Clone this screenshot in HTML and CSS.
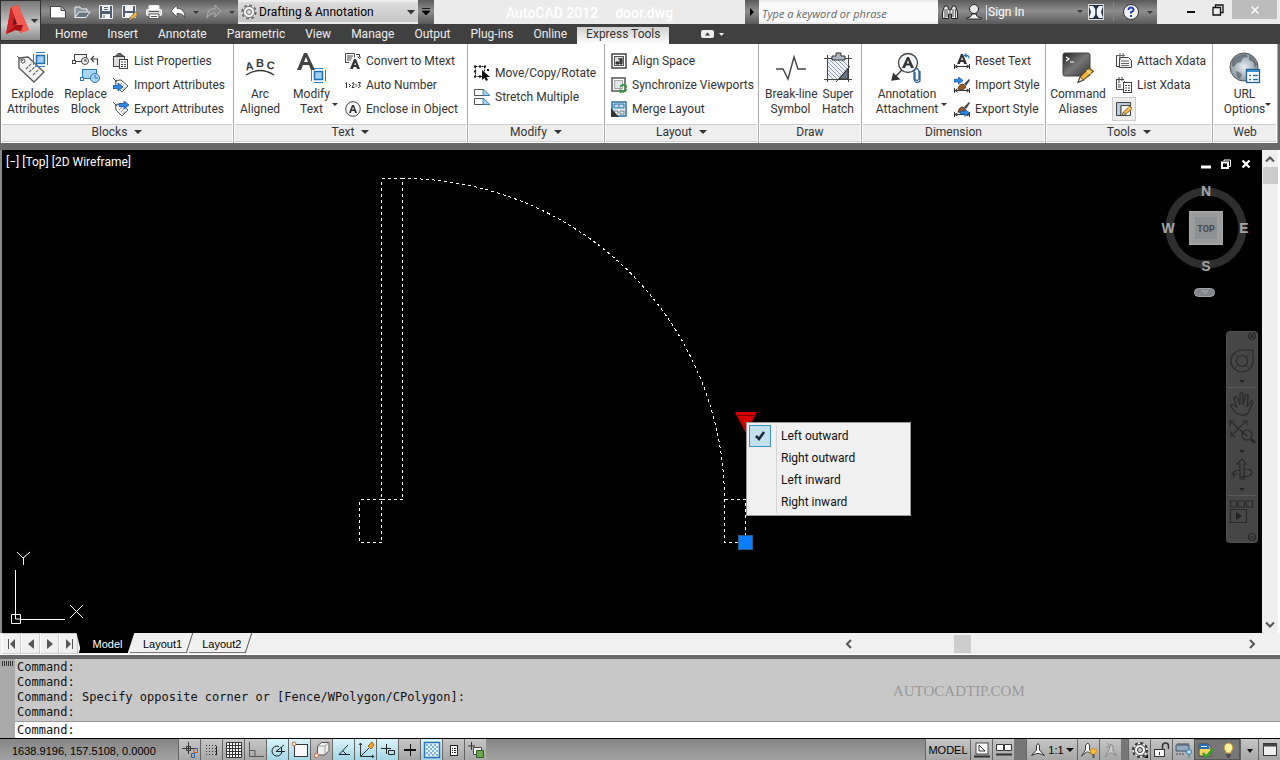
FILE: index.html
```html
<!DOCTYPE html>
<html lang="en">
<head>
<meta charset="utf-8">
<title>AutoCAD 2012 - door.dwg</title>
<link rel="stylesheet" href="styles.css">
</head>
<body>
<svg class="defs" width="0" height="0" aria-hidden="true">
  <defs>
    <g id="blueblock"><rect x="3.500" y="3.500" width="8" height="8" fill="#9fcdf0" stroke="#1f6fb5" stroke-width="1.500"/><path d="M.5 2v11M14.500 2v11M3 .5h9M3 14.500h9" stroke="#2f7fc5" fill="none"/></g>
    <g id="pencil"><path d="M0 13l2-5 8-8 4 3-9 8z" fill="#f3b53c" stroke="#6b4a1c"/><path d="M0 13l2-5 3 3z" fill="#f6e0b8" stroke="#333" stroke-width=".8"/><path d="M8 2l3.500 3.200" stroke="#fff1a8"/></g>
    <g id="arrow"><path d="M0 2.500h5V0l5 4-5 4V5.500H0z" fill="#2f8bea" stroke="#15509c" stroke-width=".8"/></g>
    <g id="dim"><path d="M.5 11v5M15.500 11v5M1 13.500h14M3.500 12L1 13.500 3.500 15M12.500 12l2.500 1.500-2.500 1.500" fill="none" stroke="#333"/></g>
    <g id="brush"><path d="M3 10q1-5 5-5l3 3q-2 4-8 2z" fill="#98592a" stroke="#4d2c12" stroke-width=".8"/><path d="M9 5l5-5 1 1-4 6z" fill="#444"/></g>
    <g id="tinytag"><path d="M2.500 3.500L8 3l7 6-6 6-6-6zM0 1l4 4" fill="#f7f7f7" stroke="#555"/><path d="M6 9l3-3M8 11l3-3M9.500 13l3-3" stroke="#888" stroke-width=".8"/></g>
  </defs>
</svg>
<header class="titlebar">
  <button class="appmenu" aria-label="Application menu">
    <svg width="38" height="38" viewBox="0 0 38 38"><path d="M9 5l7-2 11 25-9 3z" fill="#e33a35"/><path d="M9 5L4 32l8-3 3-10z" fill="#c41f22"/><path d="M9 5l9 26 9-3L16 3z" fill="#f25b52"/><path d="M9 5l6 18-3 1-2 3-6 5z" fill="#d12429"/><path d="M4 32l10-9 7 0-2 6-8-1z" fill="#a80f16"/><path d="M12 15l3 7-4 1z" fill="#661318"/><path d="M29 17h7l-3.500 4z" fill="#333"/></svg>
  </button>
  <nav class="qat" aria-label="Quick access">
    <button aria-label="New"><svg width="18" height="16"><path d="M1.500 2.500h11l4 4V14h-15z" fill="#fff" stroke="#444"/><path d="M12 2.500v4h4" fill="#bbb" stroke="#444"/></svg></button>
    <button aria-label="Open"><svg width="18" height="16"><path d="M2 14V3h5l1.500 2H14v3" fill="#8a949f" stroke="#eee"/><path d="M2 13.500L6 8h11l-4 5.500z" fill="#667380" stroke="#eee"/></svg></button>
    <button aria-label="Save"><svg width="16" height="16"><path d="M1.500 1.500h13v13h-13z" fill="#4e5d70" stroke="#edf0f3"/><path d="M4 2h8v5H4zM4 10h8v4H4z" fill="#f3f3f3"/><path d="M6 3.500h4M6 5.500h4M6 11v3" stroke="#567"/></svg></button>
    <button aria-label="Save as"><svg width="18" height="17"><path d="M1.500 1.500h13v12h-13z" fill="#4e5d70" stroke="#edf0f3"/><path d="M4 2h8v5H4zM4 9h8v4H4z" fill="#f3f3f3"/><use href="#pencil" transform="translate(8 8) scale(.65)"/></svg></button>
    <button aria-label="Print"><svg width="18" height="16"><path d="M4 6V1.500h10V6" fill="#fff" stroke="#eee"/><rect x="1.500" y="5.500" width="15" height="6" rx="1" fill="#dedede" stroke="#fff"/><path d="M4 10h10v4.500H4z" fill="#fff" stroke="#555"/><path d="M6 12.500h6M4 7.500h10" stroke="#555"/></svg></button>
    <button aria-label="Undo"><svg width="16" height="16"><path d="M7 1v3.500q8-.5 8 9.500-2-5-8-4.500V13L1 7z" fill="#fff" stroke="#444" stroke-width=".8"/></svg></button>
    <button class="drop" aria-label="Undo list"><svg width="8" height="8"><path d="M1 3h6L4 6z" fill="#3b3b3b"/></svg></button>
    <button aria-label="Redo"><svg width="16" height="16"><path d="M9 1v3.500q-8-.5-8 9.500 2-5 8-4.500V13l6-6z" fill="#888" stroke="#b5b5b5" stroke-width=".8"/></svg></button>
    <button class="drop" aria-label="Redo list"><svg width="8" height="8"><path d="M1 3h6L4 6z" fill="#3b3b3b"/></svg></button>
  </nav>
  <div class="workspace">
    <svg class="gear" width="16" height="16" viewBox="0 0 16 16"><circle cx="8" cy="8" r="6.800" fill="#eee" stroke="#666" stroke-width="1.600" stroke-dasharray="3 2.340"/><circle cx="8" cy="8" r="5.600" fill="#f5f5f5" stroke="#777"/><circle cx="8" cy="8" r="2.500" fill="#e4e4e4" stroke="#666"/></svg>
    <select aria-label="Workspace"><option>Drafting &amp; Annotation</option></select>
    <svg class="wsarrow" width="8" height="5"><path d="M0 0h8L4 4.500z" fill="#333"/></svg>
  </div>
  <button class="customize" aria-label="Customize toolbar"><svg width="8" height="8"><path d="M0 .5h8M0 3h8L4 7z" fill="#000" stroke="#000" stroke-width=".8"/></svg></button>
  <h1 class="title"><span>AutoCAD 2012</span><span>door.dwg</span></h1>
  <button class="expand" aria-label="Expand search"><svg width="6" height="8"><path d="M1 0l4 4-4 4z" fill="#000"/></svg></button>
  <input class="search" type="search" placeholder="Type a keyword or phrase" aria-label="Search help">
  <div class="infocenter">
    <button aria-label="Search"><svg width="18" height="18"><path d="M1.500 15.500V9l2-6h3l1.500 4h2l1.500-4h3l2 6v6.500h-6V11h-3v4.500z" fill="#e5e5e5" stroke="#222"/><path d="M4 6v9M6 6v8M12 6v8M14.500 6v9M8 9h2" stroke="#555"/></svg></button>
    <button class="signin"><svg width="18" height="18"><circle cx="9" cy="6" r="4.500" fill="#e9e9e9" stroke="#222"/><path d="M1.500 15q6-1 5-4h5q-1 3 5 4v1h-15z" fill="#f2f2f2" stroke="#222"/></svg><span>Sign In</span><svg width="8" height="8"><path d="M1 2h6L4 5z" fill="#3b3b3b"/></svg></button>
    <button aria-label="Exchange"><svg width="16" height="16"><rect x=".5" y=".5" width="15" height="15" fill="#26323c" stroke="#ddd"/><path d="M1 2h4l3 4 3-4h4l-2 6 2 6h-4l-3-4-3 4H1l2-6z" fill="#eef5ff"/><path d="M8 4v8" stroke="#26323c" stroke-width="1.500"/></svg></button>
    <span class="sep"></span>
    <button aria-label="Help"><svg width="18" height="18"><circle cx="9" cy="9" r="7.500" fill="#f2f2f2" stroke="#333"/><path d="M6.500 7q0-2.500 2.500-2.500T11.500 7Q11.500 8.200 9 9.200V10.500M9 12v2" stroke="#2346b5" stroke-width="2" fill="none"/></svg></button>
    <button class="drop" aria-label="Help menu"><svg width="8" height="8"><path d="M1 3h6L4 6z" fill="#3b3b3b"/></svg></button>
  </div>
  <div class="windowbtns">
    <button aria-label="Minimize"><svg width="10" height="10"><path d="M1 7h8" stroke="#111" stroke-width="2"/></svg></button>
    <button aria-label="Restore"><svg width="12" height="12"><path d="M3.500 3V1h7.500v7.500H9M1 3.500h7.500V11H1z" fill="none" stroke="#111" stroke-width="1.300"/></svg></button>
    <button class="close" aria-label="Close"><svg width="10" height="10"><path d="M1.500 1.500l7 7M8.500 1.500l-7 7" stroke="#fff" stroke-width="1.500"/></svg></button>
  </div>
</header>

<nav class="tabs">
  <a href="#">Home</a><a href="#">Insert</a><a href="#">Annotate</a><a href="#">Parametric</a><a href="#">View</a><a href="#">Manage</a><a href="#">Output</a><a href="#">Plug-ins</a><a href="#">Online</a><a href="#" class="active" aria-current="page">Express Tools</a>
  <button aria-label="Minimize ribbon"><svg width="24" height="8"><rect x="0" y="0" width="13" height="8" rx="2" fill="#eee"/><path d="M4 5.500h5L6.500 2.500z" fill="#333"/><path d="M18 3h5l-2.500 3z" fill="#eee"/></svg></button>
</nav>

<main class="ribbon">
  <section class="panel">
    <div class="tools">
      <button class="big"><svg width="32" height="32"><path d="M2 6l9-1 16 15-10 10L2 16z" fill="#f3f3f3" stroke="#555" stroke-width="1.300"/><path d="M9 17l6-6M12 20l7-6M16 23l6-6" stroke="#666" stroke-width="1.200" stroke-dasharray="3 1"/><circle cx="6" cy="9" r="2" fill="#fff" stroke="#555"/><path d="M0 4l6 5" stroke="#555"/><use href="#blueblock" x="16" y="0"/></svg>Explode<br>Attributes</button>
      <button class="big"><svg width="32" height="32"><rect x="4.500" y="2.500" width="12" height="7" fill="#f4f4f4" stroke="#444"/><rect x="2.500" y="8.500" width="3" height="3" fill="#fff" stroke="#444"/><circle cx="15" cy="9" r="3.500" fill="#f4f4f4" stroke="#444"/><path d="M15 7v2h2M27.500 13V7H21M24 4l-3 3 3 3" fill="none" stroke="#444" stroke-width="1.200"/><rect x="12.500" y="17.500" width="14" height="9" fill="#a9d7f4" stroke="#2778b5"/><rect x="10.500" y="25.500" width="3" height="3" fill="#fff" stroke="#2778b5"/><circle cx="25" cy="26" r="4.500" fill="#a9d7f4" stroke="#2778b5"/><path d="M25 23v3h3" fill="none" stroke="#2778b5"/></svg>Replace<br>Block</button>
      <ul class="rows">
        <li><button><svg width="16" height="16"><rect x=".5" y="3.500" width="11" height="10" fill="#ddd" stroke="#444"/><path d="M3 3.500V2h2V.5h3V2h2v1.500z" fill="#666" stroke="#444"/><rect x="6.500" y="6.500" width="8" height="9" fill="#fff" stroke="#444"/><path d="M8 9h2M11 9h2M8 11.500h2M11 11.500h2M8 13.500h2M11 13.500h2" stroke="#444"/></svg>List Properties</button></li>
        <li><button><svg width="16" height="16"><use href="#tinytag"/><use href="#arrow" x="0" y="6"/></svg>Import Attributes</button></li>
        <li><button><svg width="16" height="16"><use href="#tinytag"/><use href="#arrow" x="6" y="0"/></svg>Export Attributes</button></li>
      </ul>
    </div>
    <h2>Blocks<i class="tri"></i></h2>
  </section>
  <section class="panel">
    <div class="tools tight">
      <button class="big narrowbtn"><svg width="32" height="32"><g font-family="Liberation Sans,sans-serif" font-weight="bold" font-size="11" fill="#3a3a3a"><text x="2" y="18" transform="rotate(-8 5 18)">A</text><text x="12" y="15">B</text><text x="22" y="17" transform="rotate(8 26 18)">C</text></g><path d="M2 23Q16 14 30 23" fill="none" stroke="#333" stroke-width="1.300"/></svg>Arc<br>Aligned</button>
      <button class="big caret"><svg width="32" height="32"><path d="M1 18L8 1h3l8 17h-4l-2-5H7l-2 5zM8 10h4l-2-5z" fill="#444" fill-rule="evenodd"/><use href="#blueblock" x="15" y="16"/></svg>Modify<br>Text<i class="tri"></i></button>
      <ul class="rows spaced">
        <li><button><svg width="16" height="16"><path d="M.5 10V.5h9v4M2 3h6M2 5h5M2 7h4M1 9.500h3" fill="none" stroke="#444"/><path d="M5 16L9 6h2l4 10h-3l-.7-2H8.500L8 16zM9.300 12h1.800l-.9-2.500z" fill="#333" fill-rule="evenodd"/><path d="M11 1.500h3.500V4M12.500 3.500l2 2 1.500-2" fill="none" stroke="#333"/></svg>Convert to Mtext</button></li>
        <li><button><svg width="16" height="16"><path d="M.5 6.500l1-1V11M4 7l1.500 1.500L4 10M7 6.500q2-2 2 .5L7 10.500h2.500M10.500 7L12 8.500 10.500 10M13 5.500h2.500L14 8q3 .5 0 2.500h-1" fill="none" stroke="#333"/></svg>Auto Number</button></li>
        <li><button><svg width="16" height="16"><circle cx="8" cy="8" r="7.300" fill="#f7f7f7" stroke="#444"/><path d="M4 12L7 4h2l3 8h-2l-.6-2H6.500L6 12zM7 8.500h2L8 5.800z" fill="#333" fill-rule="evenodd"/></svg>Enclose in Object</button></li>
      </ul>
    </div>
    <h2>Text<i class="tri"></i></h2>
  </section>
  <section class="panel">
    <div class="tools">
      <ul class="rows mid">
        <li><button><svg width="16" height="16"><rect x="1.500" y="1.500" width="9" height="10" fill="none" stroke="#222" stroke-dasharray="2 1"/><path d="M0 1.500h3M5 1.500h3M10 1.500h3M0 6.500h3M0 11.500h3M5 11.500h3M13 5h3" stroke="#111" stroke-width="2" stroke-dasharray="2 1"/><path d="M8 5v10l2.500-2 1.500 3 2-1-1.500-3H16z" fill="#111"/></svg>Move/Copy/Rotate</button></li>
        <li><button><svg width="16" height="16"><path d="M9 .5H.5v6H15.500M9 9.500H.5v6H15.500" fill="none" stroke="#555"/><path d="M9 0l7 6.500H9zM9 9l7 6.500H9z" fill="#a9d0ed" stroke="#2778b5" stroke-width=".8"/></svg>Stretch Multiple</button></li>
      </ul>
    </div>
    <h2>Modify<i class="tri"></i></h2>
  </section>
  <section class="panel">
    <div class="tools">
      <ul class="rows">
        <li><button><svg width="16" height="16"><rect x="1" y="1" width="14" height="14" fill="#fff" stroke="#444" stroke-width="1.500"/><rect x="3.500" y="3.500" width="9" height="9" fill="#ddd" stroke="#555"/><path d="M5 9h3v2H5zM7 6h2v5h2V5" fill="#333" stroke="#333"/></svg>Align Space</button></li>
        <li><button><svg width="16" height="16"><rect x="1" y="1" width="13" height="13" fill="#fff" stroke="#555" stroke-width="1.500"/><rect x="3.500" y="3.500" width="8" height="8" fill="#dfe6ec" stroke="#aaa"/><path d="M9 10q3-4 6-.5V8M15.500 12q-3 5-6 1.500V16" fill="none" stroke="#2c9338" stroke-width="1.600"/></svg>Synchronize Viewports</button></li>
        <li><button><svg width="16" height="16"><rect x="1" y="1" width="14" height="14" fill="#e8f2fa" stroke="#2671a8" stroke-width="1.500"/><path d="M3 3h10v4H3z" fill="#b7dcf5" stroke="#2671a8"/><path d="M8 3v4M3 10h4v3M9 10h4v3H9z" fill="none" stroke="#777"/><path d="M0 7l8 9H0z" fill="#333"/></svg>Merge Layout</button></li>
      </ul>
    </div>
    <h2>Layout<i class="tri"></i></h2>
  </section>
  <section class="panel">
    <div class="tools">
      <button class="big"><svg width="32" height="32"><path d="M1 17h7l5 10 6-22 4 12h8" fill="none" stroke="#444" stroke-width="1.400"/></svg>Break-line<br>Symbol</button>
      <button class="big slim"><svg width="32" height="32"><path d="M5.500 3v27M26.500 3v27M2 6.500h28M2 27.500h28" stroke="#444"/><rect x="6" y="7" width="20" height="20" fill="#eef1f5"/><path d="M6 10l17 17M6 14l13 13M6 18l9 9M6 22l5 5M8 8l17 17M12 8l14 14M16 8l10 10M20 8l6 6" stroke="#8794a5" stroke-width=".9"/><path d="M10 8V4h4V1h5v3h4v4z" fill="#aab6c3" stroke="#333"/><path d="M17 27l9-10v10z" fill="#6c7784" stroke="#333"/><path d="M14 30l14-16" stroke="#333"/></svg>Super<br>Hatch</button>
    </div>
    <h2>Draw</h2>
  </section>
  <section class="panel">
    <div class="tools">
      <button class="big wide caret"><svg width="32" height="32"><circle cx="17" cy="11" r="9.500" fill="#f1f4f7" stroke="#444" stroke-width="1.300"/><path d="M11 16l5-11h2l5 11h-3l-1-2.500h-4L14 16zM15.800 11.500h2.400L17 8z" fill="#333" fill-rule="evenodd"/><path d="M11 18L3 26M1 28l1.500-6L8 27z" fill="#333" stroke="#333" stroke-width="1.300"/><path d="M24 20v7q2 3 4 0v-8q-2-5-5 0v8q2 6 6 2V19" fill="none" stroke="#2d6596" stroke-width="1.300"/></svg>Annotation<br>Attachment<i class="tri"></i></button>
      <ul class="rows spaced">
        <li><button><svg width="16" height="16"><use href="#dim"/><path d="M3 11L7 1h2l4 10h-3L9.300 9H6.500L6 11zM7 7h2L8 4z" fill="#333" fill-rule="evenodd"/><path d="M12 .5L10.500 2.500 13 4M11 2.500q4-1 4 3" fill="none" stroke="#2473b5" stroke-width="1.200"/></svg>Reset Text</button></li>
        <li><button><svg width="16" height="16"><use href="#dim"/><use href="#brush" x="1" y="2"/><use href="#arrow" transform="scale(.9)"/></svg>Import Style</button></li>
        <li><button><svg width="16" height="16"><use href="#dim"/><use href="#brush" x="1" y="1"/><use href="#arrow" x="7" y="9" transform="scale(.9)"/></svg>Export Style</button></li>
      </ul>
    </div>
    <h2>Dimension</h2>
  </section>
  <section class="panel">
    <div class="tools tight">
      <button class="big command-btn"><svg width="32" height="32"><defs><linearGradient id="term" x2="1" y2="1"><stop stop-color="#222"/><stop offset=".5" stop-color="#777"/><stop offset="1" stop-color="#333"/></linearGradient></defs><rect x="1" y="1" width="27" height="23" rx="2" fill="url(#term)" stroke="#444"/><path d="M4 5l3 2-3 2M8 10h4" fill="none" stroke="#fff" stroke-width="1.200"/><use href="#pencil" transform="translate(16 16) scale(1.100)"/></svg>Command<br>Aliases</button>
      <ul class="rows spaced">
        <li><button><svg width="16" height="16"><path d="M.5 2v11.500h3M3.500 4.500h9l3 3v7h-12z" fill="#f4f4f4" stroke="#444"/><path d="M5 8h8M5 10.500h8M5 12.500h8M0 2.500h9M4 0v7M7 0v4" stroke="#666"/></svg>Attach Xdata</button></li>
        <li><button><svg width="16" height="16"><path d="M.5 2v10.500h8V4M0 2.500h8M3 0v6M6 0v4M2 8h3M2 10h3" fill="none" stroke="#444"/><rect x="7.500" y="5.500" width="8" height="10" fill="#fff" stroke="#444"/><path d="M9 8.500h2M12 8.500h2M9 11h2M12 11h2M9 13.500h2M12 13.500h2" stroke="#444"/></svg>List Xdata</button></li>
        <li><button class="boxed" aria-label="Tool palette editor"><svg width="16" height="16"><path d="M.5 1.500h14v3H5v10H.5z" fill="#b9cbe0" stroke="#444"/><path d="M5 4.500h9.500v10H5z" fill="#fff" stroke="#444"/><use href="#pencil" transform="translate(6 5) scale(.75)"/></svg></button></li>
      </ul>
    </div>
    <h2>Tools<i class="tri"></i></h2>
  </section>
  <section class="panel">
    <div class="tools">
      <button class="big caret"><svg width="32" height="32"><defs><radialGradient id="globe"><stop stop-color="#e8edf1"/><stop offset="1" stop-color="#8b9aa6"/></radialGradient></defs><circle cx="15" cy="15" r="14" fill="url(#globe)" stroke="#555"/><path d="M3 9q5-7 14-7l2 3-5 1-2 4-4 1-3 4-2-1zM20 3q6 3 8 10l-2 3-2-6-4-2zM7 19l5 2 1 3-3 3q-3-3-3-8z" fill="#4d565e" opacity=".6"/><rect x="17.500" y="17.500" width="13" height="13" fill="#fff" stroke="#1f5d96" stroke-width="1.300"/><path d="M18 19h12" stroke="#3a8fd0" stroke-width="2"/><path d="M20 23.500h2M24 23.500h5M20 27.500h2M24 27.500h5" stroke="#2773ad" stroke-width="1.300"/></svg>URL<br>Options<i class="tri"></i></button>
    </div>
    <h2>Web</h2>
  </section>
</main>

<section class="viewport">
  <div class="stage">
    <svg class="drawing">
      <g transform="translate(-2 -150)" fill="none" stroke="#fff">
        <g stroke-dasharray="3 3" shape-rendering="crispEdges">
          <path d="M402.500 178.500H381.500V499.500H402.500z"/>
          <path d="M402.500 178.500A322 322 0 0 1 724.500 499.500"/>
          <path d="M381.500 499.500H359.500V542.500H381.500z"/>
          <path d="M724.500 499.500H745.500V542.500H724.500z"/>
        </g>
        <path d="M735 412h22l-11 21z" fill="#d40000" stroke="none"/>
        <path d="M736 415.500h20" stroke="#700"/>
        <rect x="738.500" y="535.500" width="14" height="14" fill="#0a7dff" stroke="#2a5a8a"/>
        <path d="M15.500 570v44M20 619.500h45M11.500 614.500h9v9h-9zM15.500 614v5h5M17 552l6 6 7-6M23.500 558v7M70 605l13 13M83 605l-13 13"/>
      </g>
    </svg>
    <p class="viewlabel"><button>[−]</button> <button>[Top]</button> <button>[2D Wireframe]</button></p>
    <div class="docbtns">
      <button aria-label="Minimize drawing"><svg width="10" height="10"><path d="M0 8h10" stroke="#fff" stroke-width="3"/></svg></button>
      <button aria-label="Restore drawing"><svg width="10" height="10"><path d="M3 2V1h6.500v6.500H8" fill="none" stroke="#fff"/><path d="M1 3.500h6V9H1z" fill="none" stroke="#fff" stroke-width="2"/></svg></button>
      <button aria-label="Close drawing"><svg width="10" height="10"><path d="M1.500 1.500l7 7M8.500 1.500l-7 7" stroke="#fff" stroke-width="2.200"/></svg></button>
    </div>
    <svg class="viewcube" width="90" height="120" viewBox="0 0 90 120" role="img" aria-label="View cube">
      <circle cx="46" cy="47" r="36.500" fill="none" stroke="#2e2e2e" stroke-width="8"/>
      <rect x="29.500" y="30.500" width="33" height="33" fill="#9c9c9c" stroke="#aaa"/><rect x="35" y="36" width="22" height="22" fill="#8e9194"/>
      <g font-family="Liberation Sans,sans-serif" font-weight="bold" text-anchor="middle" fill="#a5a5a5" font-size="14"><text x="46" y="15">N</text><text x="8" y="52">W</text><text x="84" y="52">E</text><text x="46" y="90">S</text><text x="46" y="51" font-size="9" fill="#44484c" font-family="Roboto,sans-serif">TOP</text></g>
      <rect x="34.500" y="107.500" width="20" height="8" rx="4" fill="#84848c" stroke="#a3a3aa"/><path d="M42 110h6l-3 3z" fill="none" stroke="#aaa"/>
    </svg>
    <svg class="navbar" width="32" height="212" viewBox="0 0 32 212" role="img" aria-label="Navigation bar">
      <rect x=".5" y=".5" width="31" height="211" rx="3" fill="#464646" stroke="#505050"/>
      <g fill="none" stroke="#292929" stroke-width="1.200"><circle cx="26" cy="5" r="3.500"/><path d="M24 3l4 4M28 3l-4 4"/><path d="M27 19v10a11 11 0 1 1-11-10z"/><circle cx="16" cy="30" r="5.500"/><path d="M8 22l4 4M24 22l-4 4M8 38l4-4M24 38l-4-4" stroke-width=".8"/><path d="M11 83q-6-6-6-9 2-2 6 3L8 67q2-3 4 1l2 6V63q2-3 3 0v11l3-10q3-1 2 2l-1 10 4-6q3 0 1 3l-4 9q-4 4-9 1z"/><path d="M5 91l16 14M20 90L6 104M4 95v-5h5M16 90h5v4M5 100v5h5"/><circle cx="21" cy="104" r="5"/><path d="M25 108l4 4" stroke-width="3"/><path d="M14 148v-15h-3l5-5 4 5h-2v15z"/><path d="M8 145q-4-5 6-6M18 138q9 0 8 4t-12 4M8 140v7M5 143h7"/><path d="M4.500 170h6v6h-6zM12.500 170h6v6h-6zM20.500 170h6v6h-6zM4.500 178.500h16v13h-16z"/><circle cx="26" cy="206" r="3.500"/><path d="M24 206h4"/></g>
      <path d="M13 49h6l-3 3zM13 119h6l-3 3zM13 157h6l-3 3zM10 181v8l6-4z" fill="#222"/><path d="M2 56.500h28M2 164.500h28" stroke="#5a5a5a"/>
    </svg>
    <div class="menu" role="menu">
      <button role="menuitemradio" aria-checked="true"><span class="check"><svg width="12" height="12"><path d="M2 6l3 3 5-7" fill="none" stroke="#1b2a33" stroke-width="2.500"/></svg></span>Left outward</button>
      <button role="menuitemradio" aria-checked="false"><span></span>Right outward</button>
      <button role="menuitemradio" aria-checked="false"><span></span>Left inward</button>
      <button role="menuitemradio" aria-checked="false"><span></span>Right inward</button>
    </div>
  </div>
  <div class="vscroll">
    <button aria-label="Scroll up"><svg width="10" height="8"><path d="M1 6.500l4-4 4 4" fill="none" stroke="#555" stroke-width="2"/></svg></button>
    <span class="thumb"></span>
    <button aria-label="Scroll down"><svg width="10" height="8"><path d="M1 1.500l4 4 4-4" fill="none" stroke="#555" stroke-width="2"/></svg></button>
  </div>
</section>

<div class="layoutbar">
  <div class="pager">
    <button aria-label="First layout"><svg width="10" height="12"><path d="M1.500 1v10" stroke="#555"/><path d="M8 1v10L3 6z" fill="#555"/></svg></button>
    <button aria-label="Previous layout"><svg width="10" height="12"><path d="M8 1v10L2 6z" fill="#555"/></svg></button>
    <button aria-label="Next layout"><svg width="10" height="12"><path d="M2 1v10l6-5z" fill="#555"/></svg></button>
    <button aria-label="Last layout"><svg width="10" height="12"><path d="M8.500 1v10" stroke="#555"/><path d="M2 1v10l5-5z" fill="#555"/></svg></button>
  </div>
  <nav class="sheets"><a href="#" class="current">Model</a><a href="#">Layout1</a><a href="#">Layout2</a></nav>
  <div class="hscroll">
    <button aria-label="Scroll left"><svg width="8" height="10"><path d="M6 1L2 5l4 4" fill="none" stroke="#555" stroke-width="2"/></svg></button>
    <span class="thumb"></span>
    <button aria-label="Scroll right"><svg width="8" height="10"><path d="M2 1l4 4-4 4" fill="none" stroke="#555" stroke-width="2"/></svg></button>
  </div>
</div>

<section class="command">
  <span class="grip"></span>
  <div class="console">
    <div class="history"><p>Command:</p><p>Command:</p><p>Command: Specify opposite corner or [Fence/WPolygon/CPolygon]:</p><p>Command:</p><span class="mark">AUTOCADTIP.COM</span></div>
    <div class="prompt"><label for="cmd">Command:</label><input id="cmd" type="text"></div>
  </div>
</section>

<footer class="status">
  <output class="coords">1638.9196, 157.5108, 0.0000</output>
  <div class="group">
    <button aria-label="Infer constraints"><svg width="18" height="18"><path d="M1 7.500h12M7.500 1v12M5.500 5.500h4v4h-4z" fill="none" stroke="#333"/><path d="M13 7.500h3.500v4M10.500 12.500h3v4h-3z" fill="none" stroke="#1f5fae"/><path d="M16.500 8v3.500H13v-4" fill="none" stroke="#c6512b"/></svg></button>
    <button aria-label="Snap mode"><svg width="18" height="18"><path d="M3 4.500h12M3 7.500h12M3 10.500h12M3 13.500h12" stroke="#333" stroke-dasharray="1 2"/><path d="M13.500 5v9" stroke="#222"/></svg></button>
    <button aria-label="Grid"><svg width="18" height="18"><path d="M1.500 1.500h15v15h-15zM4.500 1v16M7.500 1v16M10.500 1v16M13.500 1v16M1 4.500h16M1 7.500h16M1 10.500h16M1 13.500h16" fill="#fff" stroke="#333"/></svg></button>
    <button aria-label="Ortho"><svg width="18" height="18"><path d="M2.500 1v14.500H17M3 9.500h5v6" fill="none" stroke="#555"/></svg></button>
    <button class="on" aria-label="Polar tracking"><svg width="18" height="18"><path d="M13 10a5 5 0 1 1-3-4.500M15 4L7 10.500h9M12.500 6v7" fill="none" stroke="#222"/></svg></button>
    <button class="on" aria-label="Object snap"><svg width="18" height="18"><rect x="3.500" y="3.500" width="13" height="12" fill="#f8f8f8" stroke="#333"/><circle cx="3" cy="3" r="2" fill="#fff" stroke="#d55c29"/></svg></button>
    <button aria-label="3D object snap"><svg width="18" height="18"><path d="M4.500 5l4-3.500h7.500v8L12 14H4.500z" fill="#eee" stroke="#555"/><path d="M5 5h7v9M12 5l4-3.500" fill="none" stroke="#888" stroke-width=".8"/><circle cx="3.500" cy="14.500" r="2" fill="#fff" stroke="#d55c29"/></svg></button>
    <button class="on" aria-label="Object snap tracking"><svg width="18" height="18"><path d="M13 4L4 13.500h11M8 10l3 3" fill="none" stroke="#222"/></svg></button>
    <button class="on" aria-label="Dynamic UCS"><svg width="18" height="18"><path d="M3.500 2v13.500H17M4 15L12 7M2 4l1.500-2L5 4M15 14l2 1.500-2 1.500" fill="none" stroke="#333"/><path d="M11 5l4-4 2 3-3 4z" fill="#f0a42e" stroke="#a4681a"/></svg></button>
    <button class="on" aria-label="Dynamic input"><svg width="18" height="18"><path d="M2 7.500h10M7.500 3v10M9.500 9.500h6v4h-6z" fill="none" stroke="#222"/></svg></button>
    <button aria-label="Lineweight"><svg width="18" height="18"><path d="M3 9h12" stroke="#111" stroke-width="2"/><path d="M9.500 3v12" stroke="#111"/></svg></button>
    <button class="on" aria-label="Transparency"><svg width="18" height="18"><rect x="1.500" y="1.500" width="15" height="15" fill="#e7f3fc" stroke="#2b73b5" stroke-width="1.500"/><path d="M3 4h12M3 8h12M3 12h12" stroke="#80b3da" stroke-width="2" stroke-dasharray="2 2"/><path d="M5 6h10M5 10h10M5 14h10" stroke="#80b3da" stroke-width="2" stroke-dasharray="2 2"/></svg></button>
    <button aria-label="Quick properties"><svg width="18" height="18"><rect x="5.500" y="4.500" width="7" height="10" fill="#fff" stroke="#222"/><path d="M7 7.500h1M9 7.500h2M7 9.500h1M9 9.500h2M7 11.500h1M9 11.500h2" stroke="#222"/></svg></button>
    <button aria-label="Selection cycling"><svg width="18" height="18"><path d="M1 5h7M4.500 1v8" stroke="#333"/><path d="M6.500 6.500h8v7h-8z" fill="#fff" stroke="#444"/><path d="M9.500 9.500h7v7h-7z" fill="#6aa84f" stroke="#2f5a20"/></svg></button>
  </div>
  <div class="group right">
    <button class="text">MODEL</button>
    <button aria-label="Quick view layouts"><svg width="18" height="18"><rect x="3" y="2" width="12" height="11" fill="#fff" stroke="#444"/><path d="M6 4v6h6z" fill="none" stroke="#333"/><path d="M1 15.500h16" stroke="#333" stroke-width="2"/></svg></button>
    <button aria-label="Quick view drawings"><svg width="18" height="18"><path d="M1.500 3.500h7v6h-7zM9.500 3.500h7v6h-7z" fill="#fff" stroke="#333"/><path d="M1 13.500h16" stroke="#333" stroke-width="2"/></svg></button>
    <span class="gap"></span>
    <button class="text scale"><svg width="16" height="16"><path d="M8 1.500l1.500 2V8l5 5.500-5-2h-3l-5 2 5-5.500V3.500z" fill="#fff" stroke="#333"/></svg>1:1<svg width="8" height="6"><path d="M0 1h8L4 5z" fill="#111"/></svg></button>
    <button aria-label="Annotation visibility"><svg width="18" height="18"><path d="M8 2l1.500 2v5l4 5-5-3h-2l-5 4 4-6V4z" fill="#fff" stroke="#444"/><circle cx="13.500" cy="10.500" r="3" fill="#ffc13c" stroke="#d9882a"/><path d="M13.500 13v4" stroke="#555" stroke-width="2"/></svg></button>
    <button aria-label="Automatic scale"><svg width="18" height="18"><path d="M9 3l2 2v5l4 5-5-3H8l-5 4 4-7zM5 2l3 3M4 6h3" fill="#ccc" stroke="#888"/></svg></button>
    <span class="gap small"></span>
    <button aria-label="Workspace switching"><svg width="18" height="18"><circle cx="9" cy="9" r="7" fill="#fff" stroke="#333" stroke-width="2" stroke-dasharray="3 2.500"/><circle cx="9" cy="9" r="5.500" fill="#fff" stroke="#444"/><circle cx="9" cy="9" r="2.500" fill="#ccc" stroke="#333"/><path d="M17 13v4h-4z" fill="#111"/></svg></button>
    <button aria-label="Lock interface"><svg width="18" height="18"><rect x="1.500" y="8.500" width="10" height="7" fill="#fff" stroke="#333"/><path d="M9.500 8V5q0-3 3-3t3 3v3" fill="none" stroke="#333" stroke-width="1.500"/><path d="M6.500 11v3" stroke="#333"/></svg></button>
    <button aria-label="Hardware acceleration"><svg width="18" height="18"><path d="M1 4h13v6H1z" fill="#93a9bd" stroke="#3f5468"/><path d="M2 12v2M5 12v2M8 12v2M2 3h12" stroke="#445"/><circle cx="14" cy="11" r="2.500" fill="#b9dcf5" stroke="#377bb0"/><path d="M14 13v4" stroke="#377bb0"/></svg></button>
    <div class="tray">
      <button aria-label="Drawing status"><svg width="18" height="18"><path d="M2 3h9l3 3v9H2z" fill="#f5d65c" stroke="#444"/><path d="M2 3h9l2 5H2z" fill="#2b6bb0"/><path d="M4 5.500h6" stroke="#fff"/><path d="M6 12l3 4 7-8" fill="none" stroke="#2fa12f" stroke-width="2.500"/></svg></button>
      <button aria-label="Isolate objects"><svg width="18" height="18"><path d="M7 12q0-2-2-4 0-6 4.500-6T14 8q-2 2-2 4z" fill="#fff0a0" stroke="#b88e37"/><path d="M7 14h5M8 16h3" stroke="#444" stroke-width="1.500"/></svg></button>
    </div>
    <button class="narrow" aria-label="Status bar menu"><svg width="8" height="8"><path d="M1 3h6L4 7z" fill="#111"/></svg></button>
    <button aria-label="Clean screen"><svg width="18" height="18"><rect x="2.500" y="2.500" width="13" height="12" fill="#eee" stroke="#333"/><path d="M2 4h14" stroke="#444" stroke-width="3"/></svg></button>
  </div>
</footer>
</body>
</html>
```
FILE: styles.css
```css
* { box-sizing: border-box; }
body {
  margin: 0;
  min-height: 100vh;
  display: flex;
  flex-direction: column;
  background: #686868;
  color: #333;
  font: 12px/15px Roboto, "Noto Sans", sans-serif;
}
button, input, select { font: inherit; color: inherit; margin: 0; padding: 0; border: 0; background: none; }
button { display: inline-flex; align-items: center; justify-content: center; }
svg { flex: none; display: block; }
a { color: inherit; text-decoration: none; }
h1, h2, p, ul { margin: 0; padding: 0; font-size: inherit; font-weight: normal; list-style: none; }
.defs { position: absolute; }

.titlebar { position: relative; display: flex; height: 24px; background: #ebebeb; }
.appmenu {
  position: absolute; z-index: 2; left: 0; top: 0; width: 41px; height: 41px;
  border: 1px solid #333; background: linear-gradient(#777, #c9c9c9 60%, #8b8b8b);
}
.qat, .infocenter, .customize, .expand { background: linear-gradient(#5b5b5b, #8e8e8e 45%, #5a5a5a); }
.qat { display: flex; align-items: center; width: 238px; padding-left: 46px; }
.qat button { width: 24px; height: 24px; }
.qat .drop { width: 12px; }
.workspace {
  display: grid; grid-template-columns: 16px 1fr 8px; align-items: center; gap: 2px;
  width: 180px; margin: 2px 0; padding: 0 3px; background: linear-gradient(#dcdcdc, #c6c6c6); color: #000;
}
.workspace select { appearance: none; min-width: 0; outline: 0; }
.customize { width: 16px; }
.title {
  flex: 1; display: flex; justify-content: center; gap: 17px; padding-top: 5px;
  color: #fff; font: 14px/16px Roboto, sans-serif; font-weight: 500;
}
.expand { width: 14px; }
.search { width: 179px; margin: 2px 0; padding: 3px 3px 0; background: #fafafa; outline: 0; font-size: 11px; font-style: italic; font-family: "Open Sans", sans-serif; appearance: none; }
.search::placeholder { color: #666; opacity: 1; }
.infocenter { display: flex; align-items: center; width: 219px; }
.infocenter button { width: 24px; }
.infocenter .signin { width: 124px; flex: 1; gap: 3px; padding-left: 3px; color: #fff; }
.signin span { flex: 1; text-align: left; padding-left: 1px; border-left: 1px solid #ddd; }
.infocenter .drop { width: 14px; }
.sep { width: 1px; height: 18px; margin: 0 5px; background: #888; }
.windowbtns { display: flex; width: 123px; padding: 0 3px 0 20px; }
.windowbtns button { width: 27px; height: 19px; }
.windowbtns .close { width: 45px; margin-left: auto; background: #bcbcbc; }

.tabs { display: flex; height: 20px; padding-left: 45px; background: #404040; color: #eee; }
.tabs a { padding: 3px 10px 2px; }
.tabs .active { background: linear-gradient(#cfcfcf, #fff); color: #333; margin-top: 3px; padding: 0 9px; }
.tabs button { margin-left: 32px; }

.ribbon {
  display: grid; grid-template-columns: 233fr 234fr 137fr 154fr 103fr 184fr 167fr 65fr;
  height: 99px; margin-right: 2px; background: #fff; border-left: 1px solid #777;
}
.panel { display: flex; flex-direction: column; min-width: 0; border-right: 1px solid #aaa; white-space: nowrap; }
.panel h2 { margin: 0 1px 1px; height: 18px; text-align: center; background: #eee; border-top: 1px solid #ccc; border-bottom: 1px solid #ccc; }
.tri { display: inline-block; margin-left: 7px; border: 4px solid transparent; border-top-color: #333; border-bottom: 0; vertical-align: 2px; }
.tools { flex: 1; display: flex; padding: 5px 0 0 6px; gap: 2px; }
.tight { padding-left: 2px; }
.big { position: relative; display: block; width: 51px; height: 69px; padding-top: 2px; }
.big svg { margin: 0 auto 3px; }
.big .tri { position: absolute; right: -1px; bottom: 12px; margin: 0; border-width: 3px; border-bottom: 0; }
.narrowbtn { width: 48px; }
.command-btn { width: 60px; }
.slim { width: 40px; }
.wide { width: 78px; }
.rows li { height: 24px; display: flex; align-items: center; }
.rows button { gap: 5px; }
.spaced { padding-left: 6px; }
.mid { padding-top: 12px; }
.rows .boxed { padding: 3px; margin-left: -4px; background: #eee; border: 1px solid #ccc; }

.viewport { flex: 1; display: flex; margin-top: 7px; min-height: 300px; background: #efefef; }
.stage { position: relative; flex: 1; background: #000; border-left: 2px solid #888; color: #fff; overflow: hidden; }
.drawing { position: absolute; inset: 0; width: 100%; height: 100%; }
.viewlabel { position: relative; padding: 5px 4px; }
.docbtns { position: absolute; right: 11px; top: 9px; display: flex; gap: 10px; }
.viewcube { position: absolute; right: 12px; top: 31px; }
.navbar { position: absolute; right: 4px; top: 181px; }
.menu {
  position: absolute; left: 744px; top: 272px; width: 165px; padding: 2px;
  display: flex; flex-direction: column; background: #f0f0f0; border: 1px solid #999; color: #111;
}
.menu button { justify-content: flex-start; height: 22px; gap: 10px; }
.menu span { width: 22px; height: 22px; display: grid; place-items: center; }
.menu::before { content: ""; position: absolute; left: 29px; top: 2px; bottom: 2px; width: 1px; background: #d5d5d5; }
.menu .check { background: #c4dff0; border: 1px solid #3c92c0; }
.vscroll { width: 18px; display: flex; flex-direction: column; align-items: center; border-right: 2px solid #fff; }
.vscroll button { width: 100%; height: 17px; }
.vscroll .thumb { width: 15px; height: 17px; background: #cdcdcd; margin-bottom: auto; }

.layoutbar { display: flex; height: 22px; background: #f0f0f0; border-bottom: 1px solid #fff; font: 11px/14px "Liberation Sans", sans-serif; color: #000; padding-left: 2px; }
.pager { display: flex; }
.pager button { width: 19px; border: 1px solid #ccc; border-left-color: #fff; }
.sheets { display: flex; margin-left: 4px; }
.sheets a { position: relative; z-index: 0; padding: 4px 10px; min-width: 59px; text-align: center; }
.sheets a::before { content: ""; position: absolute; z-index: -1; inset: 0 2px 1px 0; border-right: 1px solid #555; border-bottom: 1px solid #777; transform: skewX(-18deg); }
.sheets .current { color: #fff; min-width: 51px; }
.sheets .current::before { background: #000; border: 0; }
.sheets .current::after { content: ""; position: absolute; z-index: -1; left: -3px; top: 0; width: 20px; height: 20px; background: #000; transform: skewX(14deg); }
.hscroll { display: flex; align-items: center; width: 35%; min-width: 200px; margin-left: auto; padding: 0 20px 0 8px; }
.hscroll button { width: 16px; height: 20px; }
.hscroll .thumb { width: 17px; height: 18px; margin: 0 auto 0 97px; background: #cdcdcd; }

.command { display: flex; margin-top: 4px; background: #aaa; font: 12px/15px "DejaVu Sans Mono", monospace; color: #111; }
.grip { width: 11px; height: 5px; margin: 2px 2px 0 2px; background: repeating-linear-gradient(90deg, #333 0 1px, transparent 1px 2px); }
.console { flex: 1; }
.history { position: relative; padding: 1px 2px; background: #c8c8c8; border-bottom: 1px solid #999; }
.mark { position: absolute; left: 69.4%; top: 24px; color: #999; font: 15px/17px "Liberation Serif", serif; }
.prompt { display: flex; padding: 1px 2px 0; background: #fff; }
.prompt input { flex: 1; height: 15px; outline: 0; }

.status { display: flex; height: 22px; border-top: 1px solid #000; background: linear-gradient(#858585, #a3a3a3); font: 11px/14px "Liberation Sans", sans-serif; color: #000; }
.coords { width: 178px; padding: 5px 12px; }
.group { display: flex; }
.group button { width: 22px; background: linear-gradient(#c6c6c6, #a7a7a7); border-left: 1px solid #666; }
.group .on { background: linear-gradient(#d9f3fa, #a5d6e6); }
.right { margin-left: auto; }
.group .text { width: 45px; }
.group .scale { width: 51px; gap: 2px; }
.gap { width: 12px; background: #777; }
.gap.small { width: 7px; }
.tray { display: flex; width: 46px; background: #777; border: 1px solid #555; }
.tray button { background: none; border: 0; }
.group .narrow { width: 18px; }
```
